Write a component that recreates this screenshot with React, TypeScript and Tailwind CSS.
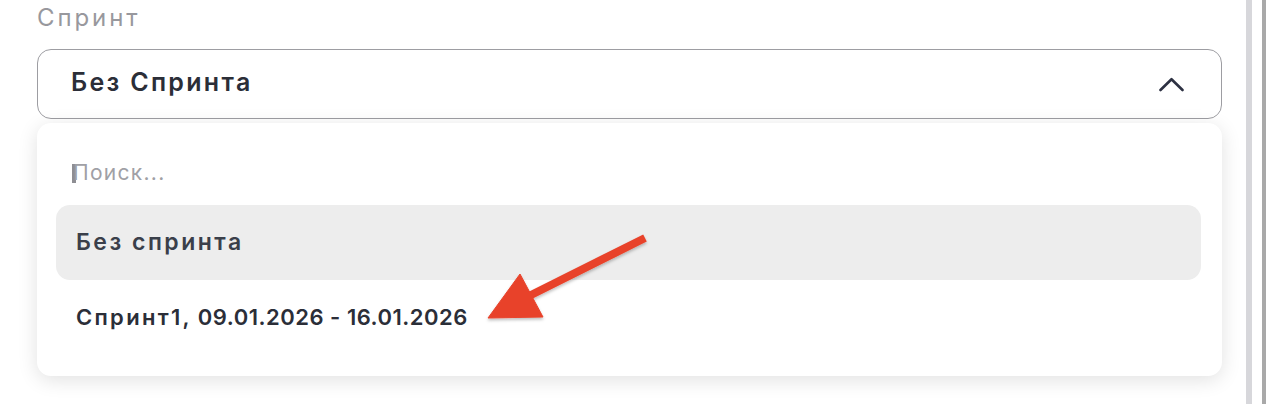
const font = { fontFamily: 'Inter, "Noto Sans", sans-serif' };

function Chevron() {
  return (
    <svg width="25" height="15" viewBox="0 0 25 15" fill="none">
      <polyline
        points="1.5,13 12.5,2.2 23.5,13"
        stroke="#2d3142"
        strokeWidth="2.6"
        strokeLinecap="round"
        strokeLinejoin="round"
      />
    </svg>
  );
}

export default function App() {
  return (
    <div className="relative flex h-[404px] w-[1266px] overflow-hidden bg-white" style={font}>
      {/* Field */}
      <div className="w-[1246px] pl-[37px] pr-[24px]">
        <div className="pt-[4px] text-[24px] leading-[28px] tracking-[2.9px] text-[#98989d]">Спринт</div>

        <div className="mt-[17px] flex h-[70px] items-center justify-between rounded-[14px] border-[1.5px] border-[#9d9da2] pl-[33px] pr-[37px]">
          <span className="-mt-[2px] text-[25px] font-semibold tracking-[2.3px] text-[#2b2e38]">Без Спринта</span>
          <Chevron />
        </div>

        <div className="mt-[4px] rounded-[14px] bg-white pb-[21px] shadow-[0_4px_20px_rgba(0,0,0,0.12)]">
          <div className="flex items-center pl-[35px] pt-[38px] pb-[20px] text-[21px] leading-[24px] tracking-[1.3px] text-[#a0a0a5]">
            <span className="mr-[-3px] h-[19px] w-[4px] bg-[#8e8e93]" />
            <span>Поиск...</span>
          </div>
          <div className="mx-[19px] mr-[21px] flex h-[75px] items-center rounded-[14px] bg-[#ededed] pl-[20px] text-[23px] font-semibold tracking-[2.5px] text-[#3a3f4a]">
            Без спринта
          </div>
          <div className="mx-[19px] mr-[21px] flex h-[75px] items-center pl-[20px] text-[22px] font-semibold text-[#2b2e38]">
            <span className="tracking-[2.3px]">Спринт1,</span>
            <span className="tracking-[0.5px]">&nbsp;09.01.2026 - 16.01.2026</span>
          </div>
        </div>
      </div>

      {/* Scrollbar edges */}
      <div className="w-[6px] bg-[#d7d7db]" />
      <div className="w-[10px] bg-white" />
      <div className="w-[4px] bg-[#a9a9a9]" />

      {/* Annotation arrow */}
      <svg className="pointer-events-none absolute left-0 top-0" width="1266" height="404">
        <defs>
          <filter id="sh" x="-20%" y="-20%" width="140%" height="140%">
            <feDropShadow dx="0" dy="2" stdDeviation="1.5" floodColor="#000" floodOpacity="0.25" />
          </filter>
        </defs>
        <g filter="url(#sh)" fill="#e8432b" stroke="#e8432b">
          <line x1="645" y1="238" x2="525" y2="298" strokeWidth="8" strokeLinecap="butt" />
          <polygon points="520,274 488,318 543,317" strokeWidth="1" />
        </g>
      </svg>
    </div>
  );
}
